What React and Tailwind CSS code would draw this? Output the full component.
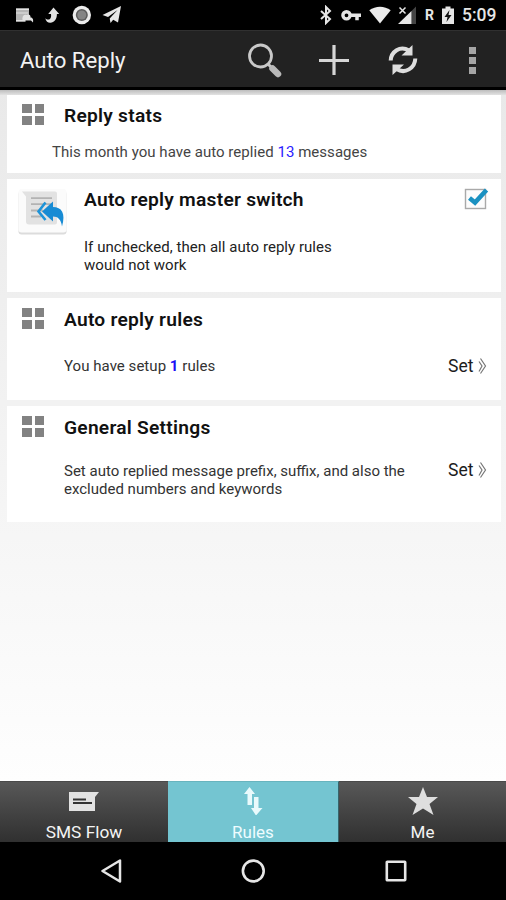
function StatusBar() {
  return (
    <div className="flex h-[30px] items-center bg-black text-[#e6e6e6]">
      {/* notifications */}
      <svg className="ml-4 h-5 w-[18px]" viewBox="0 0 18 20" fill="#e2e2e2">
        <path d="M0 3.500h13v7l-3 0-1 3 1 3H0z" fill="#b5b5b5" />
        <path d="M0 3.500h13v1.500H0zM0 7.500h12v1H0zM0 15h9v1.500H0z" />
        <path d="M6.500 13c0-2.500 2-4 4-3 2-1.500 4.500 0 4 2.500 2.500 0 3 2.500 2.500 5l-2-2H8c-1.500 0-2-1.500-1.500-2.500z" />
      </svg>
      <svg className="ml-[11px] h-5 w-[15px]" viewBox="0 0 15 20" fill="#e2e2e2">
        <path d="M8.500 2.500 14.200 9h-2.300c.2 5-2.900 8.500-6.400 8.800C3 18 1 16.500.3 13.200c1.200 1.500 3.400 1.700 4.600.7C6.200 12.800 6.300 11 6 9H3.200z" />
      </svg>
      <svg className="ml-3 h-5 w-5" viewBox="0 0 20 20">
        <circle cx="9.800" cy="10" r="9.200" fill="#ececec" />
        <circle cx="9.800" cy="10" r="6" fill="#5c5c5c" />
        <circle cx="9.800" cy="10" r="4.500" fill="#858585" />
      </svg>
      <svg className="ml-[10px] h-5 w-5" viewBox="0 0 20 20" fill="#e6e6e6">
        <path d="M19 1 16 17.500l-4.800-2.800L8.500 18l-.8-4.500L15.500 5 6 12 .5 10z" />
      </svg>

      {/* system */}
      <svg className="ml-auto h-5 w-3" viewBox="0 0 12 20" fill="none" stroke="#e6e6e6" strokeWidth="2">
        <path d="M1 6l9 8-4 4V2l4 4-9 8" />
      </svg>
      <svg className="ml-[9px] h-5 w-5" viewBox="0 0 20 20" fill="none" stroke="#e6e6e6">
        <circle cx="5.500" cy="10.300" r="3.600" strokeWidth="3.400" />
        <path d="M9 10.300h11M16 10.300v5" strokeWidth="3.500" />
      </svg>
      <svg className="ml-2 h-5 w-[22px]" viewBox="0 0 22 20" fill="#ececec">
        <path d="M11 18.500.3 5.300C6.500.5 15.500.5 21.700 5.300z" />
      </svg>
      <svg className="ml-[7px] h-5 w-[18px]" viewBox="0 0 18 20">
        <path d="M13.500 6 18 1.500V19h-4.500z" fill="#444" />
        <path d="M13.500 6v13H0z" fill="#e6e6e6" />
        <path d="m1.500 2.500 6 6M7.500 2.500l-6 6" stroke="#e6e6e6" strokeWidth="1.500" />
      </svg>
      <span className="ml-[9px] w-[9px] text-[14px] font-bold leading-none">R</span>
      <svg className="ml-[8px] h-5 w-3" viewBox="0 0 12 20">
        <path d="M3.500 1.500h5v2H12V19H0V3.500h3.500z" fill="#e6e6e6" />
        <path d="M7.500 5 2.500 12h3L4.500 17l5-7h-3z" fill="#111" />
      </svg>
      <span className="mr-[9px] ml-[8px] mt-[2px] w-[35px] whitespace-nowrap text-[17.500px] font-medium leading-none">5:09</span>
    </div>
  );
}

function Header() {
  return (
    <header className="flex h-[60px] items-center border-t border-b-3 border-t-[#303030] border-b-black bg-[#222]">
      <h1 className="ml-[20px] mt-[3px] text-[22.200px] leading-none text-[#f2f2f2]">Auto Reply</h1>
      <svg className="ml-auto mt-[3px] h-9 w-9" viewBox="0 0 36 36" fill="none">
        <circle cx="13.500" cy="13" r="11" stroke="#c9c9c9" strokeWidth="2.800" />
        <path d="m21 21 4 4" stroke="#c9c9c9" strokeWidth="3" />
        <path d="m25.500 25.500 5.500 5.500" stroke="#b8b8b8" strokeWidth="6.500" strokeLinecap="round" />
      </svg>
      <svg className="ml-[35px] mt-[2px] h-8 w-8" viewBox="0 0 32 32" stroke="#d6d6d6" strokeWidth="3.200">
        <path d="M16 1v30M1 16.500h30" />
      </svg>
      <svg className="ml-[37px] mt-[2px] h-8 w-8" viewBox="0 0 32 32" fill="none" stroke="#dedede" strokeWidth="4">
        <path d="M3.700 16.500C4 8 13 1 22 6.500" />
        <path d="M28.300 14.500C28 24 18 30.500 9.500 25" />
        <path d="M25.500 1v10.500H14.500zM5.500 31V20.500H17z" fill="#dedede" stroke="none" />
      </svg>
      <div className="mr-[30px] ml-[50px] mt-[2px] flex flex-col gap-[3px]">
        <span className="h-[7px] w-[7px] bg-[#a5a5a5]" />
        <span className="h-[7px] w-[7px] bg-[#a5a5a5]" />
        <span className="h-[7px] w-[7px] bg-[#a5a5a5]" />
      </div>
    </header>
  );
}

function GridIcon() {
  return (
    <div className="grid h-[21px] w-[22px] shrink-0 grid-cols-2 gap-[3px]">
      <span className="bg-[#828282]" />
      <span className="bg-[#828282]" />
      <span className="bg-[#828282]" />
      <span className="bg-[#828282]" />
    </div>
  );
}

function SetLink() {
  return (
    <div className="flex items-center text-[#1c1c1c]">
      <span className="w-[28px] text-[17.500px] leading-5">Set</span>
      <svg className="ml-[2px] h-[18px] w-[9px]" viewBox="0 0 9 18" fill="none" stroke="#777" strokeWidth="1.200">
        <path d="M1 4.500 4 9 1 14.500M2.500 1.500 7.500 9l-5 7.500" />
      </svg>
    </div>
  );
}

const titleClass = "whitespace-nowrap text-[19.200px] font-semibold leading-6 tracking-[0.250px] text-[#111]";

function ReplyStats() {
  return (
    <section className="h-[78px] bg-white">
      <div className="flex gap-5 pt-[9px] pl-[15px]">
        <GridIcon />
        <h2 className={titleClass}>Reply stats</h2>
      </div>
      <p className="mt-[15px] ml-[45px] text-[15px] leading-[18px] tracking-[0.040px] text-[#444]">
        This month you have auto replied <span className="text-[#2a1cff]">13</span> messages
      </p>
    </section>
  );
}

function MasterSwitch() {
  return (
    <section className="flex h-[113px] bg-white">
      <svg className="mt-[9px] ml-[10px] h-[50px] w-[52px] shrink-0" viewBox="0 0 52 50">
        <rect x="1.500" y="3" width="48" height="43.500" rx="3" fill="#dcdcdc" />
        <rect x="1.500" y="1" width="48" height="43.500" rx="3" fill="#fbfbfb" />
        <path d="M5 3.500h33q2 0 2 2v29q0 2-2 2H12q-3 0-3-3V8.500z" fill="#e2e2e2" />
        <path d="M14 10.200h21M14 16.200h21M14 22.500h12M14 28.500h10" stroke="#b3b3b3" strokeWidth="1.800" />
        <path d="m28.500 14.500-7 9 7 8.500" fill="none" stroke="#1d93d8" strokeWidth="2.600" />
        <path d="M36 13.500v5.500c8.500 0 13 6 9 19.500-1-7-4-10-9-10v5L25 23.500z" fill="#178bd4" />
      </svg>
      <div className="ml-[15px]">
        <h2 className={`${titleClass} mt-[9px]`}>Auto reply master switch</h2>
        <p className="mt-[26px] w-[270px] text-[15px] leading-[18px] tracking-[0.040px] text-[#222]">
          If unchecked, then all auto reply rules
          <br />
          would not work
        </p>
      </div>
      <svg className="mt-[7px] mr-[12px] ml-auto h-[25px] w-[25px]" viewBox="0 0 25 25" fill="none">
        <rect x="1.500" y="3.500" width="20" height="19" stroke="#a9a9a9" strokeWidth="1.400" fill="#fcfcfc" />
        <path d="m5.500 12 5.500 4.500L22.500 4" stroke="#1a91c1" strokeWidth="4.600" />
      </svg>
    </section>
  );
}

function ReplyRules() {
  return (
    <section className="h-[102px] bg-white">
      <div className="flex gap-5 pt-[10px] pl-[15px]">
        <GridIcon />
        <h2 className={titleClass}>Auto reply rules</h2>
      </div>
      <div className="mt-[24px] mr-[14px] ml-[57px] flex items-start justify-between">
        <p className="mt-[1px] text-[15px] leading-[18px] tracking-[0.040px] text-[#333]">
          You have setup <b className="text-[#1c10f5]">1</b> rules
        </p>
        <SetLink />
      </div>
    </section>
  );
}

function GeneralSettings() {
  return (
    <section className="h-[116px] bg-white">
      <div className="flex gap-5 pt-[10px] pl-[15px]">
        <GridIcon />
        <h2 className={titleClass}>General Settings</h2>
      </div>
      <div className="mt-[20px] mr-[14px] ml-[57px] flex items-start justify-between">
        <p className="mt-[2px] whitespace-nowrap text-[15px] leading-[18px] text-[#333]">
          Set auto replied message prefix, suffix, and also the
          <br />
          excluded numbers and keywords
        </p>
        <SetLink />
      </div>
    </section>
  );
}

function TabBar() {
  return (
    <nav className="flex h-[61px] text-[17px] leading-none text-[#f4f4f4]">
      <div className="flex w-[168px] flex-col items-center border-t border-t-[#4a4a4a] bg-linear-to-b from-[#585858] to-[#303030]">
        <svg className="mt-[9px] h-5 w-[30px]" viewBox="0 0 30 20">
          <path d="M0 1h30l-4 5v14H0z" fill="#e2e2e2" />
          <path d="M4 8.500h13M4 12h19" stroke="#333" strokeWidth="1.800" />
        </svg>
        <span className="mt-[13px] text-[17.300px]">SMS Flow</span>
      </div>
      <div className="flex w-[171px] flex-col items-center border-t border-r border-t-[#68b4be] border-r-[#38656b] bg-[#74c5d1] text-[#eefcff]">
        <svg className="mt-[5px] h-7 w-[20px]" viewBox="0 0 20 28" fill="#e9fafc">
          <path d="M6.500 0 12 7H9V18H4.500V7H1z" />
          <path d="M11 10H15.500V21h4l-6.500 7.500L8 21h3z" />
        </svg>
        <span className="mt-[9px]">Rules</span>
      </div>
      <div className="flex w-[167px] flex-col items-center border-t border-t-[#4a4a4a] bg-linear-to-b from-[#585858] to-[#303030]">
        <svg className="mt-[5px] h-7 w-[30px]" viewBox="0 0 30 28" fill="#dedede">
          <path d="m15 0 4 10h11l-8.500 7 4 11L15 21.500 4.500 28l4-11L0 10h11z" />
        </svg>
        <span className="mt-[9px]">Me</span>
      </div>
    </nav>
  );
}

function SystemNav() {
  return (
    <div className="flex h-[58px] items-center bg-black">
      <svg className="ml-[100px] h-6 w-[23px]" viewBox="0 0 23 24" fill="none" stroke="#e6e6e6" strokeWidth="2.500">
        <path d="M20 1.500v21L2.500 12z" strokeLinejoin="round" />
      </svg>
      <svg className="ml-[118px] h-6 w-6" viewBox="0 0 24 24" fill="none" stroke="#e6e6e6" strokeWidth="2.600">
        <circle cx="12.300" cy="12" r="10.400" />
      </svg>
      <svg className="ml-[120px] h-[22px] w-[22px]" viewBox="0 0 22 22" fill="none" stroke="#e6e6e6" strokeWidth="2.600">
        <rect x="1.800" y="1.800" width="18.400" height="18.400" rx="0.500" />
      </svg>
    </div>
  );
}

export default function App() {
  return (
    <div className="flex h-[900px] w-[506px] flex-col overflow-hidden font-['Roboto',sans-serif]">
      <StatusBar />
      <Header />
      <main className="flex-1 bg-linear-to-b from-[#e9e9e9] via-[#f5f5f5] via-60% to-[#fefefe]">
        <div className="h-[5px] bg-linear-to-b from-[#bdbdbd] to-[#e2e2e2]" />
        <div className="mr-[5px] ml-[7px] flex flex-col gap-[6px]">
          <ReplyStats />
          <MasterSwitch />
          <ReplyRules />
          <GeneralSettings />
        </div>
      </main>
      <TabBar />
      <SystemNav />
    </div>
  );
}
